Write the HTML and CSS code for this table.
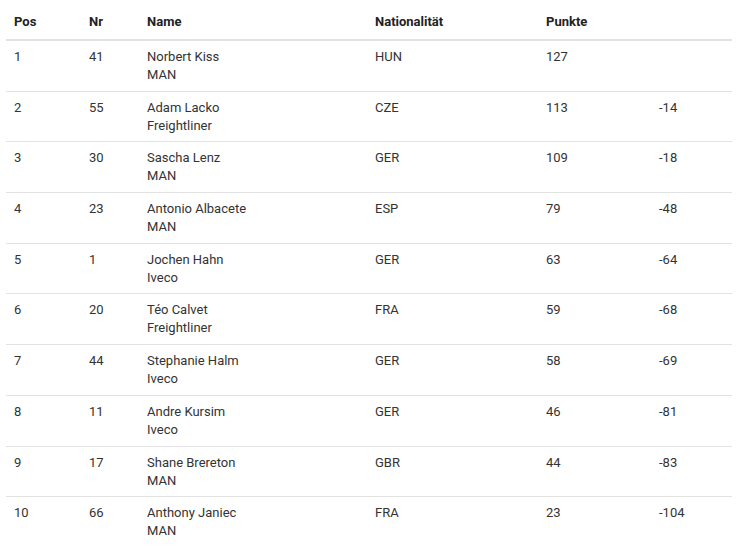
FILE: index.html
```html
<!DOCTYPE html>
<html lang="de">
<head>
<meta charset="utf-8">
<link rel="stylesheet" href="styles.css">
</head>
<body>
<table class="standings">
  <colgroup>
    <col class="c-pos"><col class="c-nr"><col class="c-name"><col class="c-nat"><col class="c-pts"><col class="c-diff">
  </colgroup>
  <thead>
    <tr><th>Pos</th><th>Nr</th><th>Name</th><th>Nationalität</th><th>Punkte</th><th></th></tr>
  </thead>
  <tbody>
    <tr><td>1</td><td>41</td><td>Norbert Kiss<br>MAN</td><td>HUN</td><td>127</td><td></td></tr>
    <tr><td>2</td><td>55</td><td>Adam Lacko<br>Freightliner</td><td>CZE</td><td>113</td><td>-14</td></tr>
    <tr><td>3</td><td>30</td><td>Sascha Lenz<br>MAN</td><td>GER</td><td>109</td><td>-18</td></tr>
    <tr><td>4</td><td>23</td><td>Antonio Albacete<br>MAN</td><td>ESP</td><td>79</td><td>-48</td></tr>
    <tr><td>5</td><td>1</td><td>Jochen Hahn<br>Iveco</td><td>GER</td><td>63</td><td>-64</td></tr>
    <tr><td>6</td><td>20</td><td>Téo Calvet<br>Freightliner</td><td>FRA</td><td>59</td><td>-68</td></tr>
    <tr><td>7</td><td>44</td><td>Stephanie Halm<br>Iveco</td><td>GER</td><td>58</td><td>-69</td></tr>
    <tr><td>8</td><td>11</td><td>Andre Kursim<br>Iveco</td><td>GER</td><td>46</td><td>-81</td></tr>
    <tr><td>9</td><td>17</td><td>Shane Brereton<br>MAN</td><td>GBR</td><td>44</td><td>-83</td></tr>
    <tr><td>10</td><td>66</td><td>Anthony Janiec<br>MAN</td><td>FRA</td><td>23</td><td>-104</td></tr>
  </tbody>
</table>
</body>
</html>
```
FILE: styles.css
```css
html, body {
  margin: 0;
  padding: 0;
  background: #fff;
}
body {
  padding: 8px 9px 0 6px;
  font-family: Roboto, "Liberation Sans", sans-serif;
  font-size: 13px;
  line-height: 18px;
  color: #333;
}
.standings {
  width: 726px;
  border-collapse: collapse;
  table-layout: fixed;
}
.c-pos { width: 75px; }
.c-nr { width: 58px; }
.c-name { width: 228px; }
.c-nat { width: 171px; }
.c-pts { width: 113px; }
.c-diff { width: 81px; }
.standings th {
  text-align: left;
  font-weight: 700;
  padding: 5px 8px 8px;
  border-bottom: 2px solid #e2e2e2;
  color: #222;
}
.standings td {
  text-align: left;
  vertical-align: top;
  padding: 7px 8px 6.7px;
  border-bottom: 1px solid #e2e2e2;
}
```
